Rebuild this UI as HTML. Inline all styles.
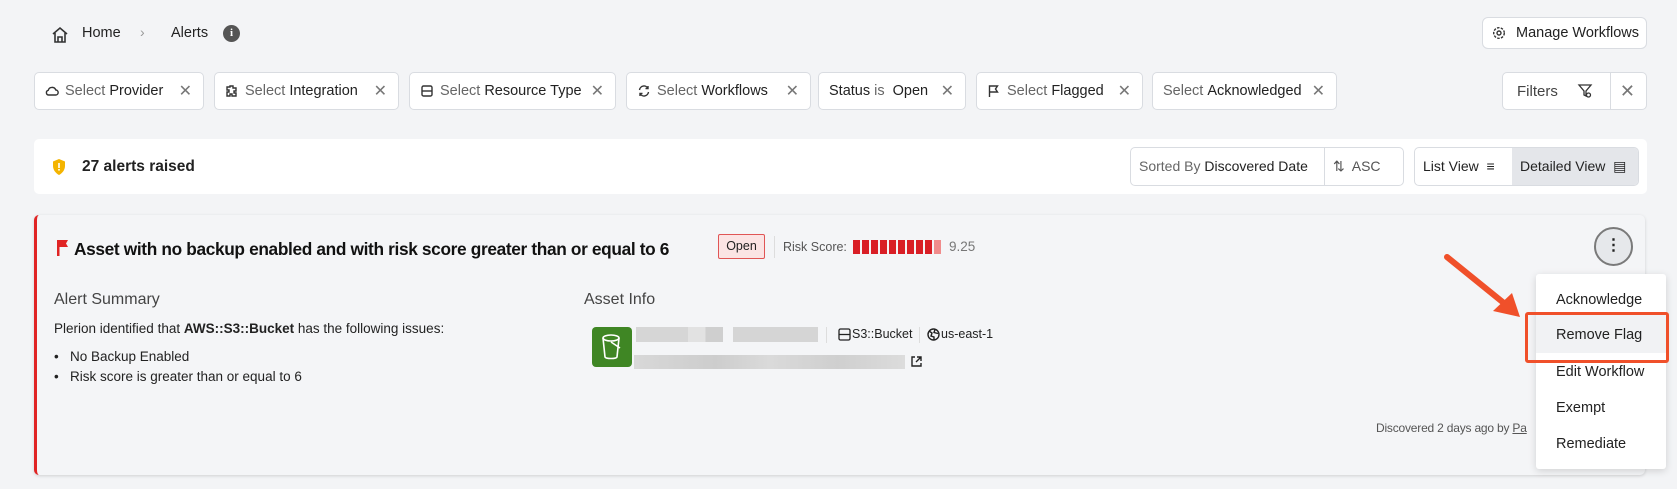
<!DOCTYPE html>
<html><head><meta charset="utf-8"><style>
*{box-sizing:border-box;margin:0;padding:0}
body{width:1677px;height:489px;background:#f3f4f6;font-family:"Liberation Sans",sans-serif;color:#222;position:relative;overflow:hidden;font-size:14px}
.a{position:absolute}
.chip{position:absolute;top:72px;height:38px;background:#fff;border:1px solid #d9dce1;border-radius:5px;display:flex;align-items:center;padding:0 10px;font-size:14.5px;white-space:nowrap}
.chip .g{color:#666;margin-right:4px}
.chip .x{position:absolute;right:11px;color:#777;font-size:16px}
.chip svg{margin-right:6px}
.mi{position:absolute;left:1556px;font-size:14.5px;color:#222}
</style></head><body>
<svg class="a" style="left:51px;top:26px" width="18" height="18" viewBox="0 0 18 18" fill="none" stroke="#333" stroke-width="1.6"><path d="M2 8L9 2l7 6M4 7v9h10V7M7 16v-5h4v5"/></svg>
<div class="a" style="left:82px;top:25px;font-size:14.5px">Home</div>
<div class="a" style="left:140px;top:24px;font-size:14px;color:#999">›</div>
<div class="a" style="left:171px;top:25px;font-size:14.5px">Alerts</div>
<div class="a" style="left:223px;top:25px;width:17px;height:17px;border-radius:50%;background:#555;color:#fff;font-size:11px;font-weight:bold;text-align:center;line-height:17px;font-family:'Liberation Serif',serif">i</div>
<div class="a" style="left:1482px;top:17px;width:165px;height:32px;background:#fff;border:1px solid #d9dce1;border-radius:6px;font-size:14.5px;line-height:30px;padding-left:33px">Manage Workflows</div>
<svg class="a" style="left:1492px;top:26px" width="14" height="14" viewBox="0 0 14 14" fill="none" stroke="#333" stroke-width="1.4"><circle cx="7" cy="7" r="2"/><circle cx="7" cy="7" r="5.3" stroke-dasharray="2.5 1.3"/></svg>

<div class="chip" style="left:34px;width:170px"><svg width="14" height="14" viewBox="0 0 14 14" fill="none" stroke="#333" stroke-width="1.4"><path d="M3.5 11h7a2.5 2.5 0 0 0 .3-5A4 4 0 0 0 3.2 6.3 2.4 2.4 0 0 0 3.5 11z"/></svg><span class="g">Select</span>Provider<span class="x">✕</span></div>
<div class="chip" style="left:214px;width:185px"><svg width="14" height="14" viewBox="0 0 14 14" fill="none" stroke="#333" stroke-width="1.4"><path d="M5 2h3v2h3v3H9v2h2v3H7v-2H5v2H2V8h2V6H2V3h3z"/></svg><span class="g">Select</span>Integration<span class="x">✕</span></div>
<div class="chip" style="left:409px;width:207px"><svg width="14" height="14" viewBox="0 0 14 14" fill="none" stroke="#333" stroke-width="1.4"><rect x="2" y="2" width="10" height="10" rx="1.5"/><path d="M2 7h10"/></svg><span class="g">Select</span>Resource Type<span class="x">✕</span></div>
<div class="chip" style="left:626px;width:185px"><svg width="14" height="14" viewBox="0 0 14 14" fill="none" stroke="#333" stroke-width="1.4"><path d="M2.5 6a4.5 4.5 0 0 1 8.5-1.5M11.5 8a4.5 4.5 0 0 1-8.5 1.5M11 2v2.5H8.5M3 12V9.5h2.5"/></svg><span class="g">Select</span>Workflows<span class="x">✕</span></div>
<div class="chip" style="left:818px;width:148px">Status&nbsp;<span class="g">is</span>&nbsp;Open<span class="x">✕</span></div>
<div class="chip" style="left:976px;width:167px"><svg width="14" height="14" viewBox="0 0 14 14" fill="none" stroke="#333" stroke-width="1.4"><path d="M2.5 13V2h8l-2 3 2 3h-8"/></svg><span class="g">Select</span>Flagged<span class="x">✕</span></div>
<div class="chip" style="left:1152px;width:185px"><span class="g">Select</span>Acknowledged<span class="x">✕</span></div>
<div class="chip" style="left:1502px;width:145px;font-size:15px;color:#444;padding-left:14px">Filters<svg style="position:absolute;left:74px" width="16" height="16" viewBox="0 0 16 16" fill="none" stroke="#333" stroke-width="1.3"><path d="M2 2h12l-5 6v5l-2-1V8z"/><circle cx="11.5" cy="12" r="2"/></svg><div style="position:absolute;left:107px;top:0;bottom:0;border-left:1px solid #d9dce1"></div><span class="x" style="right:11px;font-size:18px">✕</span></div>

<div class="a" style="left:34px;top:139px;width:1613px;height:55px;background:#fff;border-radius:5px"></div>
<svg class="a" style="left:52px;top:159px" width="14" height="16" viewBox="0 0 14 16"><path d="M7 0L13 2.5V7c0 4-3 7.5-6 9-3-1.5-6-5-6-9V2.5z" fill="#f4b400"/><rect x="6.2" y="4" width="1.6" height="5" fill="#fff"/><rect x="6.2" y="10" width="1.6" height="1.6" fill="#fff"/></svg>
<div class="a" style="left:82px;top:158px;font-size:15.5px;font-weight:bold">27 alerts raised</div>
<div class="a" style="left:1130px;top:147px;width:274px;height:39px;background:#fff;border:1px solid #d9dce1;border-radius:5px;font-size:14px;line-height:37px;padding-left:8px"><span style="color:#666">Sorted By</span> Discovered Date<div style="position:absolute;left:193px;top:0;bottom:0;border-left:1px solid #d9dce1"></div><span style="position:absolute;left:202px;color:#555">⇅&nbsp; ASC</span></div>
<div class="a" style="left:1414px;top:147px;width:225px;height:39px;background:#fff;border:1px solid #d9dce1;border-radius:5px;overflow:hidden;font-size:14px;line-height:37px"><span style="position:absolute;left:8px">List View&nbsp; ≡</span><div style="position:absolute;left:97px;top:0;width:130px;height:39px;background:#e4e6ea;padding-left:8px">Detailed View&nbsp; ▤</div></div>

<div class="a" style="left:34px;top:215px;width:1611px;height:260px;background:#f4f5f7;border-left:3px solid #e02424;border-radius:5px;box-shadow:0 1px 3px rgba(0,0,0,.15)"></div>
<svg class="a" style="left:57px;top:240px" width="12" height="16" viewBox="0 0 12 16"><path d="M0 0h11l-2 3.5 2 3.5H2.5v9H0z" fill="#e02424"/></svg>
<div class="a" style="left:74px;top:239px;font-size:17.3px;font-weight:bold;color:#111;white-space:nowrap;letter-spacing:-.35px">Asset with no backup enabled and with risk score greater than or equal to 6</div>
<div class="a" style="left:718px;top:234px;width:47px;height:25px;background:#fbe4e4;border:1px solid #e05555;border-radius:2px;font-size:12.5px;line-height:23px;text-align:center">Open</div>
<div class="a" style="left:774px;top:236px;height:22px;border-left:1px solid #ddd"></div>
<div class="a" style="left:783px;top:240px;font-size:12.5px;color:#555">Risk Score:</div>
<div class="a" style="left:853px;top:240px;height:14px;display:flex;gap:2px"><i style="width:7px;background:#d91f26"></i><i style="width:7px;background:#d91f26"></i><i style="width:7px;background:#d91f26"></i><i style="width:7px;background:#d91f26"></i><i style="width:7px;background:#d91f26"></i><i style="width:7px;background:#d91f26"></i><i style="width:7px;background:#d91f26"></i><i style="width:7px;background:#d91f26"></i><i style="width:7px;background:#d91f26"></i><i style="width:7px;background:#f08c8c"></i></div>
<div class="a" style="left:949px;top:239px;font-size:13.5px;color:#777">9.25</div>

<div class="a" style="left:54px;top:291px;font-size:16px;color:#444">Alert Summary</div>
<div class="a" style="left:584px;top:291px;font-size:16px;color:#444">Asset Info</div>
<div class="a" style="left:54px;top:321px;font-size:13.5px">Plerion identified that <b>AWS::S3::Bucket</b> has the following issues:</div>
<div class="a" style="left:54px;top:349px;font-size:13.5px">•&nbsp;&nbsp; No Backup Enabled</div>
<div class="a" style="left:54px;top:369px;font-size:13.5px">•&nbsp;&nbsp; Risk score is greater than or equal to 6</div>

<div class="a" style="left:592px;top:327px;width:40px;height:40px;background:#3f8624;border-radius:4px"></div>
<svg class="a" style="left:600px;top:333px" width="24" height="28" viewBox="0 0 24 28" fill="none" stroke="#fff" stroke-width="1.6"><ellipse cx="11" cy="5" rx="8" ry="3"/><path d="M3 5l2 19c1 2 11 2 12 0l2-19M11 9l9 6"/></svg>
<div class="a" style="left:636px;top:327px;width:87px;height:15px;background:linear-gradient(90deg,#d6d6d6 60%,#e2e2e2 60% 80%,#cfcfcf 80%)"></div>
<div class="a" style="left:733px;top:327px;width:85px;height:15px;background:#d5d5d5"></div>
<div class="a" style="left:826px;top:327px;height:16px;border-left:1px solid #ddd"></div>
<svg class="a" style="left:838px;top:328px" width="13" height="13" viewBox="0 0 13 13" fill="none" stroke="#222" stroke-width="1.3"><rect x="1" y="1" width="11" height="11" rx="1.5"/><path d="M1 6.5h11"/></svg>
<div class="a" style="left:852px;top:327px;font-size:12.5px">S3::Bucket</div>
<div class="a" style="left:919px;top:327px;height:16px;border-left:1px solid #ddd"></div>
<svg class="a" style="left:927px;top:328px" width="13" height="13" viewBox="0 0 13 13" fill="none" stroke="#222" stroke-width="1.4"><circle cx="6.5" cy="6.5" r="5.5"/><path d="M2 3l3 2-1 3 3 1v3M8 1.5l-1 3 4 1"/></svg>
<div class="a" style="left:941px;top:327px;font-size:12.5px">us-east-1</div>
<div class="a" style="left:634px;top:355px;width:271px;height:14px;background:linear-gradient(90deg,#d8d8d8,#cdcdcd 30%,#dadada 50%,#cfcfcf 75%,#dcdcdc)"></div>
<svg class="a" style="left:910px;top:355px" width="13" height="13" viewBox="0 0 13 13" fill="none" stroke="#222" stroke-width="1.4"><path d="M5 2H2v9h9V8M7 2h4v4M11 2L6 7"/></svg>

<div class="a" style="left:1376px;top:421px;font-size:12px;color:#555;letter-spacing:-.2px">Discovered 2 days ago by <u>Pa</u></div>

<div class="a" style="left:1594px;top:227px;width:39px;height:39px;border-radius:50%;border:2px solid #7a7a7a;background:#e6e8eb;text-align:center;font-size:16px;line-height:33px;font-weight:bold">⋮</div>

<div class="a" style="left:1536px;top:274px;width:130px;height:195px;background:#fff;box-shadow:0 2px 8px rgba(0,0,0,.15);border-radius:3px"></div>
<div class="a" style="left:1536px;top:313px;width:130px;height:40px;background:#f1f2f4"></div>
<div class="mi" style="top:292px">Acknowledge</div>
<div class="mi" style="top:327px">Remove Flag</div>
<div class="mi" style="top:364px">Edit Workflow</div>
<div class="mi" style="top:400px">Exempt</div>
<div class="mi" style="top:436px">Remediate</div>
<div class="a" style="left:1525px;top:312px;width:144px;height:51px;border:3px solid #f0502a;border-radius:3px"></div>
<svg class="a" style="left:1440px;top:250px" width="90" height="75" viewBox="0 0 90 75"><path d="M7 7L70 58" stroke="#f0502a" stroke-width="6" stroke-linecap="round"/><path d="M80 67L53 61 72 43z" fill="#f0502a"/></svg>
</body></html>
